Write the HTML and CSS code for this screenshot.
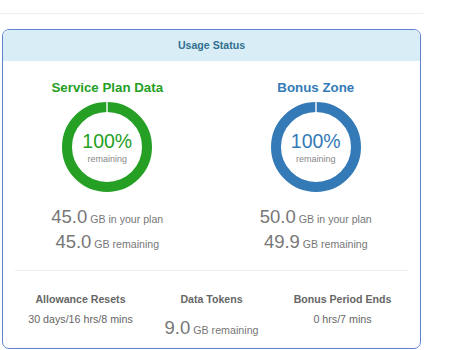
FILE: index.html
```html
<!DOCTYPE html>
<html lang="en">
<head>
  <meta charset="UTF-8" />
  <title>Usage Status</title>
  <meta name="viewport" content="width=device-width, initial-scale=1.0" />
  <link rel="stylesheet" href="styles.css">
</head>
<body>

  <hr class="top-rule">

  <section class="panel">
    <header class="panel-heading">Usage Status</header>

    <div class="meters">
      <div class="meter meter--plan">
        <h2 class="meter-title">Service Plan Data</h2>
        <div class="ring">
          <svg viewBox="0 0 90 90" width="90" height="90">
            <circle cx="45" cy="45" r="40" />
            <rect x="44.3" y="0" width="1.4" height="11" fill="#fff" />
          </svg>
          <div class="ring-label">
            <span class="ring-pct">100%</span>
            <span class="ring-sub">remaining</span>
          </div>
        </div>
        <p class="amount"><span class="num">45.0</span> GB in your plan</p>
        <p class="amount"><span class="num">45.0</span> GB remaining</p>
      </div>

      <div class="meter meter--bonus">
        <h2 class="meter-title">Bonus Zone</h2>
        <div class="ring">
          <svg viewBox="0 0 90 90" width="90" height="90">
            <circle cx="45" cy="45" r="40" />
            <rect x="44.3" y="0" width="1.4" height="11" fill="#fff" />
          </svg>
          <div class="ring-label">
            <span class="ring-pct">100%</span>
            <span class="ring-sub">remaining</span>
          </div>
        </div>
        <p class="amount"><span class="num">50.0</span> GB in your plan</p>
        <p class="amount"><span class="num">49.9</span> GB remaining</p>
      </div>
    </div>

    <div class="stats">
      <div class="stat">
        <h3>Allowance Resets</h3>
        <p>30 days/16 hrs/8 mins</p>
      </div>
      <div class="stat">
        <h3>Data Tokens</h3>
        <p class="amount"><span class="num">9.0</span> GB remaining</p>
      </div>
      <div class="stat">
        <h3>Bonus Period Ends</h3>
        <p>0 hrs/7 mins</p>
      </div>
    </div>
  </section>

</body>
</html>
```

FILE: styles.css
```css
body {
  margin: 0;
  padding: 0 29px 0 2px;
  font-family: "Liberation Sans", Arial, sans-serif;
  color: #666;
  background: #fff;
}

.top-rule {
  margin: 13px -2px 15px;
  border: 0;
  border-top: 1px solid #eee;
}

.panel {
  border: 1.5px solid #5f82cf;
  border-radius: 7px;
  overflow: hidden;
  height: 320px;
  box-sizing: border-box;
}

.panel-heading {
  background: #d9edf7;
  color: #31708f;
  font-weight: bold;
  font-size: 10.6px;
  text-align: center;
  height: 31px;
  line-height: 31px;
}

.meters {
  display: grid;
  grid-template-columns: 1fr 1fr;
  padding-top: 18px;
}

.meter {
  display: flex;
  flex-direction: column;
  align-items: center;

  --color: #25a025;

  &.meter--bonus { --color: #337ab7; }
}

.meter-title {
  margin: 0 0 5px;
  font-size: 13.3px;
  line-height: 18px;
  color: var(--color);
}

.ring {
  position: relative;
  width: 90px;
  height: 90px;
  margin-bottom: 15px;

  svg { display: block; }

  circle {
    fill: none;
    stroke: var(--color);
    stroke-width: 10;
  }
}

.ring-label {
  position: absolute;
  inset: 0;
  display: flex;
  flex-direction: column;
  align-items: center;
  justify-content: center;
  padding-top: 2px;
}

.ring-pct {
  font-size: 19.5px;
  line-height: 22px;
  color: var(--color);
}

.ring-sub {
  font-size: 9px;
  line-height: 14px;
  color: #888;
}

.amount {
  margin: 0;
  font-size: 10.6px;
  line-height: 25px;
  color: #777;

  .num {
    font-size: 18.5px;
    line-height: 1;
  }
}

.stats {
  display: grid;
  grid-template-columns: repeat(3, 1fr);
  margin: 13px 12px 0;
  padding-top: 20px;
  border-top: 1px solid #eee;
  text-align: center;
}

.stat {
  margin: 0 -12px;

  h3 {
    margin: 0 0 5px;
    font-size: 10.6px;
    line-height: 16px;
    color: #666;
  }

  p {
    margin: 0;
    font-size: 10.7px;
    line-height: 14px;
  }

  .amount {
    line-height: 24px;
    margin-top: 11px;
  }
}
```
